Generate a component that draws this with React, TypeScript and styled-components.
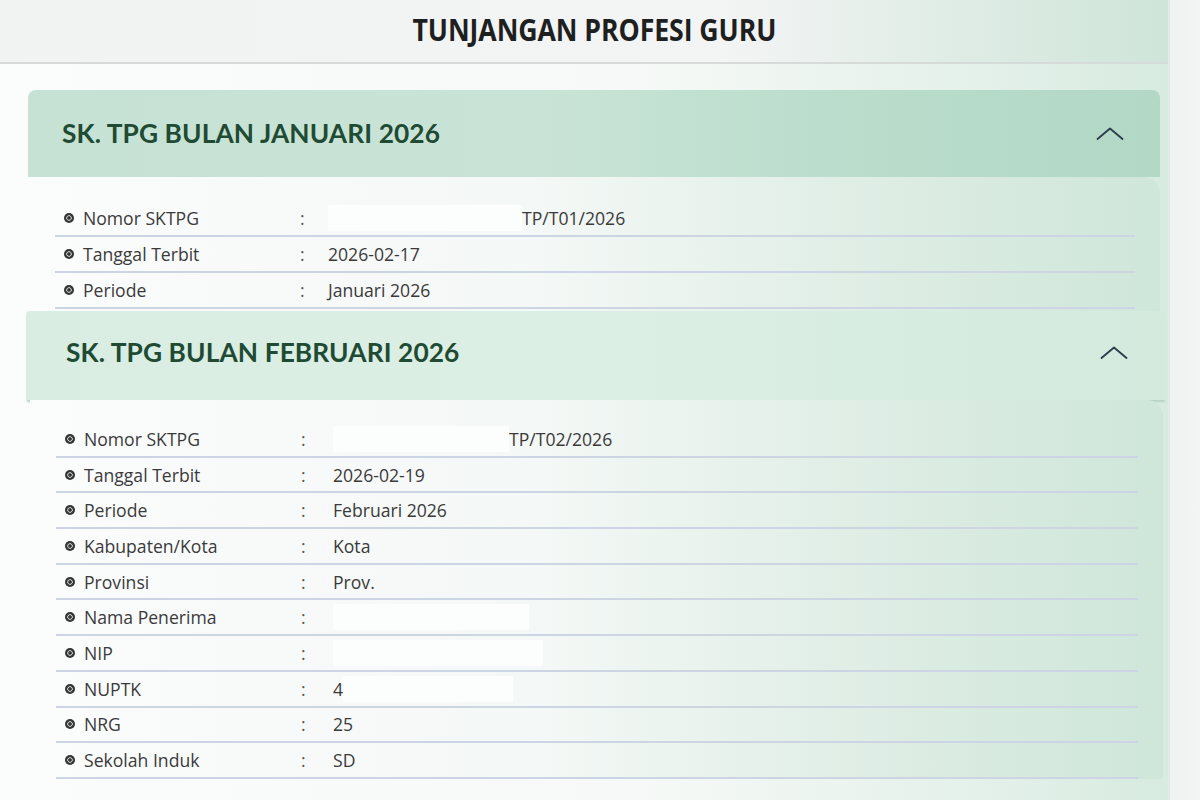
import React from 'react';
import styled, { createGlobalStyle } from 'styled-components';

const GlobalStyle = createGlobalStyle`
  *, *::before, *::after { box-sizing: border-box; }
  html, body {
    margin: 0;
    padding: 0;
    font-family: 'Open Sans', 'Liberation Sans', sans-serif;
    background: #f4f6f5;
  }
`;

const Page = styled.div`
  width: 1200px;
  height: 800px;
  overflow: hidden;
  display: flex;
`;

const Main = styled.div`
  width: 1170px;
  flex-shrink: 0;
  display: flex;
  flex-direction: column;
  border-right: 2px solid #e2e8e5;
  background: linear-gradient(90deg, #fbfcfc 0%, #f6f9f7 55%, #e3f0e9 85%, #d7ebe0 100%);
`;

const Side = styled.div`
  flex: 1;
  background: linear-gradient(90deg, #eef2f0, #f3f5f4);
`;

const TopBar = styled.div`
  height: 64px;
  flex-shrink: 0;
  display: flex;
  align-items: center;
  justify-content: center;
  padding-left: 20px;
  border-bottom: 2px solid #d6dad8;
  background: linear-gradient(90deg, #f1f2f2 0%, #f3f4f4 62%, #dcebe3 85%, #cfe5d9 100%);
`;

const Title = styled.h1`
  margin: 0 0 4px 0;
  font-family: 'Open Sans', 'Liberation Sans', sans-serif;
  font-weight: 700;
  font-size: 30px;
  color: #1e1f1f;
  letter-spacing: -0.1px;
  transform: scaleX(0.89);
`;

const Content = styled.div`
  padding: 26px 8px 0 28px;
  display: flex;
  flex-direction: column;
`;

const Card = styled.section<{ $shiftLeft?: number; $shiftRight?: number }>`
  display: flex;
  flex-direction: column;
  margin-left: ${p => -(p.$shiftLeft ?? 0)}px;
  margin-right: ${p => -(p.$shiftRight ?? 0)}px;
`;

const CardHeader = styled.div<{ $light?: boolean; $height: number }>`
  height: ${p => p.$height}px;
  display: flex;
  align-items: center;
  justify-content: space-between;
  padding: 0 ${p => (p.$light ? 38 : 36)}px ${p => (p.$light ? 7 : 2)}px ${p => (p.$light ? 40 : 34)}px;
  border-radius: ${p => (p.$light ? '4px 4px 0 0' : '8px 8px 0 0')};
  background: ${p =>
    p.$light
      ? 'linear-gradient(90deg, #d9ede2 0%, #dcefe5 50%, #d3eadd 100%)'
      : 'linear-gradient(90deg, #c6e2d4 0%, #c9e4d6 45%, #b9dccb 75%, #b3d8c6 100%)'};
  box-shadow: ${p => (p.$light ? '0 3px 2px -1px #b9d3c5' : 'none')};
`;

const CardTitle = styled.h2`
  margin: 0;
  font-family: Lato, 'Open Sans', sans-serif;
  font-weight: 700;
  font-size: 26.3px;
  color: #1f4a33;
  letter-spacing: 0.1px;
`;

const Chevron = () => (
  <svg width="28" height="16" viewBox="0 0 28 16" fill="none">
    <path d="M1.5 14 L14 3.5 L26.5 14" stroke="#2c3f4c" strokeWidth="1.9" strokeLinecap="round" strokeLinejoin="round" />
  </svg>
);

const CardBody = styled.div<{ $clip?: number; $inset: number }>`
  ${p => (p.$clip ? `height: ${p.$clip}px; overflow: hidden;` : '')}
  padding: ${p => (p.$clip ? 24 : 22)}px 25px 0 ${p => p.$inset}px;
  margin: 0 ${p => (p.$clip ? 0 : 3)}px 0 ${p => (p.$clip ? 0 : 4)}px;
  border-radius: 0 16px 0 0;
  background: linear-gradient(90deg, #fbfcfc 0%, #f4f8f6 45%, #dcece3 78%, #cfe6da 100%);
`;

const Row = styled.div<{ $h: number }>`
  height: ${p => p.$h}px;
  display: grid;
  grid-template-columns: 28px 217px 28px 1fr;
  align-items: center;
  border-bottom: 2px solid #cdd4e3;
  font-size: 17.6px;
  color: #3a3a3a;
`;

const Bullet = styled.span`
  justify-self: center;
  width: 10px;
  height: 10px;
  border-radius: 50%;
  background: radial-gradient(circle, #3a3a3a 0 1.5px, #c4c4c4 1.9px 2.5px, #353535 3px);
`;

const Colon = styled.span`
  color: #555;
`;

const Value = styled.span`
  display: flex;
  align-items: center;
`;

const Redact = styled.span<{ $w: number }>`
  display: inline-block;
  width: ${p => p.$w}px;
  height: 26px;
  background: #fcfdfd;
`;

type Field = { label: string; value?: string; pre?: number; post?: number };

const january: Field[] = [
  { label: 'Nomor SKTPG', pre: 194, value: 'TP/T01/2026' },
  { label: 'Tanggal Terbit', value: '2026-02-17' },
  { label: 'Periode', value: 'Januari 2026' },
];

const february: Field[] = [
  { label: 'Nomor SKTPG', pre: 176, value: 'TP/T02/2026' },
  { label: 'Tanggal Terbit', value: '2026-02-19' },
  { label: 'Periode', value: 'Februari 2026' },
  { label: 'Kabupaten/Kota', value: 'Kota' },
  { label: 'Provinsi', value: 'Prov.' },
  { label: 'Nama Penerima', post: 196 },
  { label: 'NIP', post: 210 },
  { label: 'NUPTK', value: '4', post: 170 },
  { label: 'NRG', value: '25' },
  { label: 'Sekolah Induk', value: 'SD' },
];

const Fields = ({ items, h, pad }: { items: Field[]; h: number; pad: number }) => (
  <>
    {items.map(f => (
      <Row key={f.label} $h={h}>
        <Bullet />
        <span>{f.label}</span>
        <Colon>:</Colon>
        <Value style={{ paddingLeft: pad }}>
          {f.pre ? <Redact $w={f.pre} /> : null}
          {f.value}
          {f.post ? <Redact $w={f.post} /> : null}
        </Value>
      </Row>
    ))}
  </>
);

export default function App() {
  return (
    <>
      <GlobalStyle />
      <Page>
        <Main>
          <TopBar>
            <Title>TUNJANGAN PROFESI GURU</Title>
          </TopBar>
          <Content>
            <Card>
              <CardHeader $height={87}>
                <CardTitle>SK. TPG BULAN JANUARI 2026</CardTitle>
                <Chevron />
              </CardHeader>
              <CardBody $clip={134} $inset={27}>
                <Fields items={january} h={36} pad={0} />
              </CardBody>
            </Card>
            <Card $shiftLeft={2} $shiftRight={6}>
              <CardHeader $light $height={89}>
                <CardTitle>SK. TPG BULAN FEBRUARI 2026</CardTitle>
                <Chevron />
              </CardHeader>
              <CardBody $inset={26}>
                <Fields items={february} h={35.7} pad={4} />
              </CardBody>
            </Card>
          </Content>
        </Main>
        <Side />
      </Page>
    </>
  );
}
